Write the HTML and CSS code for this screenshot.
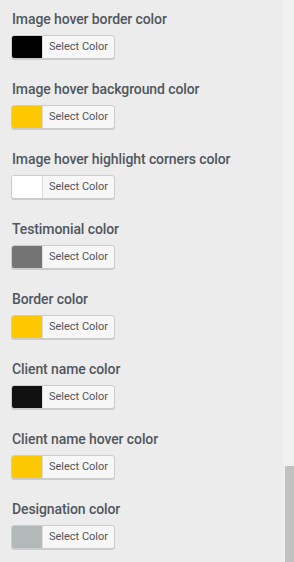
FILE: index.html
```html
<!DOCTYPE html>
<html lang="en">
<head>
  <meta charset="UTF-8">
  <meta name="viewport" content="width=device-width, initial-scale=1.0">
  <title>Color Settings</title>
  <link rel="stylesheet" href="styles.css">
</head>
<body>
  <div class="panel">
    <div class="control">
      <span class="control-title">Image hover border color</span>
      <button type="button" class="color-result"><span class="swatch swatch-black"></span><span class="color-text">Select Color</span></button>
    </div>
    <div class="control">
      <span class="control-title">Image hover background color</span>
      <button type="button" class="color-result"><span class="swatch swatch-yellow"></span><span class="color-text">Select Color</span></button>
    </div>
    <div class="control">
      <span class="control-title">Image hover highlight corners color</span>
      <button type="button" class="color-result"><span class="swatch swatch-white"></span><span class="color-text">Select Color</span></button>
    </div>
    <div class="control">
      <span class="control-title">Testimonial color</span>
      <button type="button" class="color-result"><span class="swatch swatch-grey"></span><span class="color-text">Select Color</span></button>
    </div>
    <div class="control">
      <span class="control-title">Border color</span>
      <button type="button" class="color-result"><span class="swatch swatch-yellow"></span><span class="color-text">Select Color</span></button>
    </div>
    <div class="control">
      <span class="control-title">Client name color</span>
      <button type="button" class="color-result"><span class="swatch swatch-dark"></span><span class="color-text">Select Color</span></button>
    </div>
    <div class="control">
      <span class="control-title">Client name hover color</span>
      <button type="button" class="color-result"><span class="swatch swatch-yellow"></span><span class="color-text">Select Color</span></button>
    </div>
    <div class="control">
      <span class="control-title">Designation color</span>
      <button type="button" class="color-result"><span class="swatch swatch-silver"></span><span class="color-text">Select Color</span></button>
    </div>
  </div>

  <div class="scroll-track"><div class="scroll-thumb"></div></div>
</body>
</html>
```

FILE: styles.css
```css
html, body {
  height: 100%;
}

body {
  margin: 0;
  background: #ececec;
  font-family: Roboto, 'Noto Sans', sans-serif;
  overflow: hidden;
}

.panel {
  display: flex;
  flex-direction: column;
  padding: 11px 0 0 11px;
}

.control {
  display: flex;
  flex-direction: column;
  align-items: flex-start;
  margin-bottom: 22px;
}

.control-title {
  display: block;
  font-size: 14px;
  line-height: 16px;
  font-weight: 500;
  letter-spacing: -0.1px;
  color: #50575e;
  margin-bottom: 8px;
  padding-left: 1px;
}

.color-result {
  display: flex;
  align-items: stretch;
  height: 24px;
  width: 104px;
  padding: 0;
  margin: 0;
  border: 1px solid #ccc;
  border-radius: 3px;
  background: #f7f7f7;
  box-shadow: 0 1px 0 #ccc;
  cursor: pointer;
  overflow: hidden;
  box-sizing: border-box;
}

.swatch {
  width: 30px;
  flex: none;
  border-right: 1px solid #ddd;
}

.swatch-black { background: #000; }
.swatch-dark { background: #111; }
.swatch-yellow { background: #fdc800; }
.swatch-white { background: #fff; }
.swatch-grey { background: #747474; }
.swatch-silver { background: #b3b8b8; }

.color-text {
  flex: 1;
  font-family: Roboto, 'Noto Sans', sans-serif;
  font-size: 11px;
  line-height: 22px;
  color: #555;
  text-align: center;
}

.scroll-track {
  position: fixed;
  top: 0;
  right: 0;
  width: 11px;
  height: 100%;
  background: #f0f0f0;
}

.scroll-thumb {
  position: absolute;
  top: 466px;
  right: 0;
  width: 9px;
  bottom: 0;
  background: #c1c1c1;
}
```
